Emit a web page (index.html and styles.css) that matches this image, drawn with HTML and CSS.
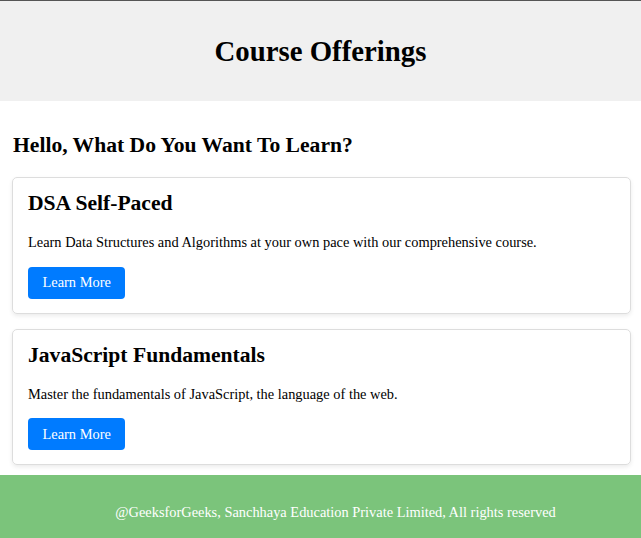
FILE: index.html
```html
<!DOCTYPE html>
<html lang="en">

<head>
   <meta charset="UTF-8">
   <meta name="viewport" content="width=device-width, initial-scale=1.0">
   <title>Course Offerings</title>

   <link rel="stylesheet" href="styles.css">
</head>

<body>
   <header class="site-header">
      <h1>Course Offerings</h1>
   </header>

   <main class="content">
      <h2 class="greeting">Hello, What Do You Want To Learn?</h2>

      <!-- Course cards -->
      <div class="course-card">
         <h2 class="course-title">DSA Self-Paced</h2>
         <p>Learn Data Structures and Algorithms at your own pace with our comprehensive course.</p>
         <button class="learn-btn">Learn More</button>
      </div>

      <div class="course-card">
         <h2 class="course-title">JavaScript Fundamentals</h2>
         <p>Master the fundamentals of JavaScript, the language of the web.</p>
         <button class="learn-btn">Learn More</button>
      </div>
   </main>

   <footer class="site-footer">
      <p>@GeeksforGeeks, Sanchhaya Education Private Limited, All rights reserved</p>
   </footer>
</body>

</html>
```

FILE: styles.css
```css
/* General body styling */
body {
   font-family: "Liberation Serif", "Times New Roman", serif;
   font-size: 14.4px;
   margin: 0;
   border-top: 1px solid #555;
   background-color: #ffffff;
   color: #000;
}

/* Header */
.site-header {
   background-color: #f0f0f0;
   padding: 34px 10px 33px;
   text-align: center;
}

.site-header h1 {
   font-size: 28.8px;
   margin: 0;
}

/* Main content */
.content {
   padding: 32px 10px 9.5px 12px;
}

.greeting {
   font-size: 21.6px;
   margin: 0 0 19px 1px;
}

/* Course card */
.course-card {
   border: 1px solid #ddd;
   border-radius: 5px;
   padding: 13px 15px 14px;
   margin-bottom: 15px;
   box-shadow: 0 2px 4px rgba(0, 0, 0, 0.08);
}

.course-card:last-child {
   margin-bottom: 0;
}

.course-title {
   font-size: 21.6px;
   margin: 0 0 18px;
}

.course-card p {
   margin: 0 0 15.5px;
}

.learn-btn {
   display: block;
   font-family: "Liberation Serif", "Times New Roman", serif;
   font-size: 14.4px;
   background-color: #007BFF;
   color: white;
   border: none;
   border-radius: 4px;
   padding: 7.5px 14.5px;
   cursor: pointer;
}

.learn-btn:hover {
   background-color: #0056b3;
}

/* Footer */
.site-footer {
   background-color: #7bc47b;
   color: #ffffff;
   padding: 29px 0 28px 30px;
   text-align: center;
}

.site-footer p {
   margin: 0;
}
```
